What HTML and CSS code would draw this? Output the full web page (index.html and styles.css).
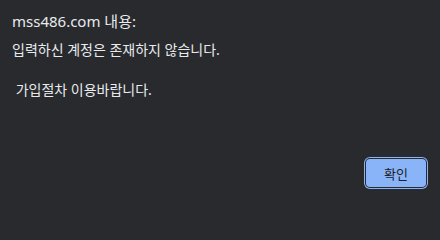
FILE: index.html
```html
<!DOCTYPE html>
<html lang="ko">
<head>
<meta charset="utf-8">
<link rel="stylesheet" href="styles.css">
</head>
<body>
<div class="dialog">
  <div class="title">mss486.com 내용:</div>
  <div class="message">입력하신 계정은 존재하지 않습니다.

 가입절차 이용바랍니다.</div>
  <div class="actions">
    <button class="ok">확인</button>
  </div>
</div>
</body>
</html>
```
FILE: styles.css
```css
html, body {
  margin: 0;
  padding: 0;
  background: #292a2d;
}
.dialog {
  box-sizing: border-box;
  width: 440px;
  height: 204px;
  padding: 10px 14px 17px 12px;
  display: flex;
  flex-direction: column;
  color: #e8eaed;
  font-family: "Noto Sans", "Noto Sans CJK KR", sans-serif;
}
.title {
  font-size: 15px;
  line-height: 22px;
  height: 22px;
}
.message {
  margin-top: 8px;
  font-size: 14px;
  line-height: 20px;
  white-space: pre-wrap;
  flex: 1;
}
.actions {
  display: flex;
  justify-content: flex-end;
}
.ok {
  width: 60px;
  height: 28px;
  padding: 0;
  border: none;
  border-radius: 4px;
  background: #8ab4f8;
  color: #202124;
  font-family: "Noto Sans CJK KR", sans-serif;
  font-size: 13px;
  box-shadow: 0 0 0 1px #292a2d, 0 0 0 2px #8ab4f8;
}
```
